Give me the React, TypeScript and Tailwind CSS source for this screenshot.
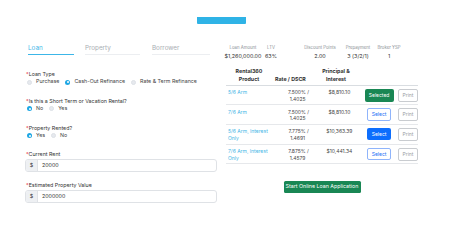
const radioGroups = [
  { label: "Loan Type", options: ["Purchase", "Cash-Out Refinance", "Rate & Term Refinance"], selected: 1 },
  { label: "Is this a Short Term or Vacation Rental?", options: ["No", "Yes"], selected: 0 },
  { label: "Property Rented?", options: ["Yes", "No"], selected: 0 },
];

const summary = [
  { label: "Loan Amount", value: "$1,260,000.00", w: "w-[34px]", ml: "ml-0" },
  { label: "LTV", value: "63%", w: "w-[22px]", ml: "ml-0" },
  { label: "Discount Points", value: "2.00", w: "w-[40px]", ml: "ml-[18px]" },
  { label: "Prepayment", value: "3 (3/2/1)", w: "w-[30px]", ml: "ml-[3px]" },
  { label: "Broker YSP", value: "1", w: "w-[30px]", ml: "ml-[1px]" },
];

const rows = [
  { product: ["5/6 Arm"], rate: "7.500% /", dscr: "1.4025", pi: "$8,810.10", state: "selected" },
  { product: ["7/6 Arm"], rate: "7.500% /", dscr: "1.4025", pi: "$8,810.10", state: "outline" },
  { product: ["5/6 Arm, Interest", "Only"], rate: "7.775% /", dscr: "1.4691", pi: "$10,363.39", state: "solid" },
  { product: ["7/6 Arm, Interest", "Only"], rate: "7.875% /", dscr: "1.4579", pi: "$10,441.34", state: "outline" },
];

function Radio({ on }: { on: boolean }) {
  return on ? (
    <span className="w-[5px] h-[5px] rounded-full bg-[#1ea7e4] flex items-center justify-center">
      <span className="w-[2px] h-[2px] rounded-full bg-white" />
    </span>
  ) : (
    <span className="w-[5px] h-[5px] rounded-full bg-[#e6e9ee] border-[0.5px] border-[#dde1e6]" />
  );
}

function Label({ text }: { text: string }) {
  return (
    <div className="text-[5.3px] leading-[7px] text-[#333]">
      <span className="text-[#e5242a]">*</span>
      {text}
    </div>
  );
}

export default function App() {
  return (
    <div className="w-[466px] h-[243px] bg-white overflow-hidden font-['Inter',sans-serif] text-[#333]">
      <div className="ml-[197px] mt-[17px] w-[49px] h-[7px] bg-[#2fb3e6] rounded-b-[1px]" />

      <div className="flex mt-[20px]">
        {/* left form */}
        <div className="ml-[25px] w-[192px] h-[184px] overflow-hidden">
          <div className="flex ml-[3px] text-[6.3px] leading-[8px]">
            <div className="w-[46px] pb-[2px] border-b-[1.5px] border-[#3cb6e8] text-[#45b8e8]">Loan</div>
            <div className="ml-[11px] w-[55px] pb-[2px] border-b-[1.5px] border-[#eceef1] text-[#a8adb3]">Property</div>
            <div className="ml-[12px] w-[58px] pb-[2px] border-b-[1.5px] border-[#eceef1] text-[#a8adb3]">Borrower</div>
          </div>

          <div className="mt-[16px] ml-[1px]">
            {radioGroups.map((g, gi) => (
              <div key={gi} className={gi === 0 ? "" : gi === 1 ? "mt-[11.5px]" : "mt-[12px]"}>
                <Label text={g.label} />
                <div className="flex items-center h-[8px] text-[5.3px] ml-[1px]">
                  {g.options.map((o, oi) => (
                    <div key={oi} className="flex items-center mr-[6px]">
                      <Radio on={oi === g.selected} />
                      <span className="ml-[4px] text-[#444]">{o}</span>
                    </div>
                  ))}
                </div>
              </div>
            ))}

            <div className="mt-[11px]">
              <Label text="Current Rent" />
              <div className="mt-[1.5px] -ml-[1px] flex h-[13px] border-[0.75px] border-[#dfe2e6] rounded-[3px] overflow-hidden text-[5.3px]">
                <div className="w-[12px] bg-[#eef0f3] flex items-center justify-center text-[#333] border-r-[0.75px] border-[#dfe2e6]">$</div>
                <div className="pl-[4px] flex items-center text-[#333]">20000</div>
              </div>
            </div>

            <div className="mt-[9.5px]">
              <Label text="Estimated Property Value" />
              <div className="mt-[1.5px] -ml-[1px] flex h-[13px] border-[0.75px] border-[#dfe2e6] rounded-[3px] overflow-hidden text-[5.3px]">
                <div className="w-[12px] bg-[#eef0f3] flex items-center justify-center text-[#333] border-r-[0.75px] border-[#dfe2e6]">$</div>
                <div className="pl-[4px] flex items-center text-[#333]">2000000</div>
              </div>
            </div>
          </div>
        </div>

        {/* right results */}
        <div className="ml-[9px] w-[192px]">
          <div className="flex mt-[1px]">
            {summary.map((s) => (
              <div key={s.label} className={`${s.w} ${s.ml} flex flex-col items-center whitespace-nowrap`}>
                <div className="text-[4.3px] leading-[6px] text-[#8a8f95]">{s.label}</div>
                <div className="mt-[1.5px] text-[5.4px] leading-[7px] text-[#333]">{s.value}</div>
              </div>
            ))}
          </div>

          <div className="mt-[7px] flex items-end border-b-[1.5px] border-[#d9dde1] pb-[2px] text-[5.3px] leading-[8px] font-bold text-[#333]">
            <div className="w-[46px] text-center">Rental360<br />Product</div>
            <div className="w-[44px] pl-[3px]">Rate / DSCR</div>
            <div className="w-[40px] text-center">Principal &amp;<br />Interest</div>
          </div>

          {rows.map((r, i) => (
            <div key={i} className="flex h-[19.7px] border-b-[0.75px] border-[#e6e8eb] text-[5px] leading-[6.5px]">
              <div className="w-[46px] pl-[2px] pt-[3.5px] text-[#45b6e6]">
                {r.product.map((p, pi) => (
                  <div key={pi}>{p}</div>
                ))}
              </div>
              <div className="w-[40px] pt-[3.5px] text-center text-[#444] ml-[6px]">
                <div className="pl-[2px]">{r.rate}</div>
                <div>{r.dscr}</div>
              </div>
              <div className="w-[40px] pt-[3.5px] text-center text-[#444] ml-[2px]">{r.pi}</div>
              <div className="w-[40px] flex justify-center pt-[3px]">
                {r.state === "selected" && (
                  <div className="w-[29px] h-[13px] rounded-[2px] bg-[#198754] text-white flex items-center justify-center">Selected</div>
                )}
                {r.state === "outline" && (
                  <div className="w-[24px] h-[12.5px] rounded-[2px] border-[0.75px] border-[#8fb4fb] text-[#1b6ff5] flex items-center justify-center">Select</div>
                )}
                {r.state === "solid" && (
                  <div className="w-[24px] h-[12.5px] rounded-[2px] bg-[#0d6efd] text-white flex items-center justify-center">Select</div>
                )}
              </div>
              <div className="pt-[3px] ml-[-1px]">
                <div className="w-[20px] h-[13px] rounded-[2px] border-[0.75px] border-[#c9ccd0] text-[#9a9ea3] flex items-center justify-center">Print</div>
              </div>
            </div>
          ))}

          <div className="mt-[16.5px] flex justify-center">
            <div className="w-[77px] h-[12px] rounded-[1.5px] bg-[#198754] text-white text-[5.3px] flex items-center justify-center">
              Start Online Loan Application
            </div>
          </div>
        </div>
      </div>
    </div>
  );
}
